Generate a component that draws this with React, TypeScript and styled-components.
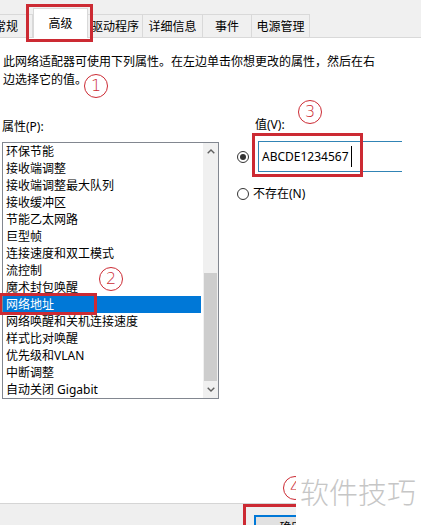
import styled, {createGlobalStyle} from "styled-components";

const GlobalStyle = createGlobalStyle`
  body {
    margin: 0;
    font-family: "Noto Sans", "Noto Sans CJK SC", sans-serif;
  }
`

const RED = "#cc2a33";

const Page = styled.div`
  position: relative;
  width: 421px;
  height: 525px;
  overflow: hidden;
  background: #fff;
  display: flex;
  flex-direction: column;
  font-size: 12px;
  color: #000;
`

const TabStrip = styled.div`
  box-sizing: border-box;
  height: 38px;
  background: #f0f0f0;
  border-bottom: 1px solid #d9d9d9;
  display: flex;
  align-items: flex-end;
`

const TabRow = styled.div`
  display: flex;
  align-items: flex-end;
  margin-left: -20px;
`

const Tab = styled.div<{ $w: number; $active?: boolean }>`
  position: relative;
  box-sizing: border-box;
  width: ${p => p.$w}px;
  height: ${p => (p.$active ? 30 : 23)}px;
  margin-bottom: ${p => (p.$active ? -1 : 0)}px;
  background: ${p => (p.$active ? "#fff" : "#f0f0f0")};
  border-top: 1px solid #d9d9d9;
  border-right: 1px solid #d9d9d9;
  border-left: ${p => (p.$active ? "1px solid #d9d9d9" : "none")};
  display: flex;
  align-items: center;
  justify-content: center;
  padding-bottom: ${p => (p.$active ? 2 : 0)}px;
  white-space: nowrap;
`

const RedFrame = styled.div<{ $l: number; $t: number; $w: number; $h: number }>`
  position: absolute;
  left: ${p => p.$l}px;
  top: ${p => p.$t}px;
  width: ${p => p.$w}px;
  height: ${p => p.$h}px;
  box-sizing: border-box;
  border: 3px solid ${RED};
  pointer-events: none;
  z-index: 3;
`

const Marker = styled.div<{ $l: number; $t: number }>`
  position: absolute;
  left: ${p => p.$l}px;
  top: ${p => p.$t}px;
  width: 24px;
  height: 24px;
  box-sizing: border-box;
  border: 1.5px solid ${RED};
  border-radius: 50%;
  color: ${RED};
  font-family: "DejaVu Sans", sans-serif;
  font-size: 16px;
  font-weight: 300;
  line-height: 21px;
  text-align: center;
  z-index: 3;
`

const Body = styled.div`
  padding: 0 3px;
`

const Description = styled.div`
  position: relative;
  padding-top: 15px;
  line-height: 18px;
  white-space: nowrap;
`

const Columns = styled.div`
  display: flex;
  margin-top: 29px;
`

const LeftCol = styled.div`
  margin-left: -1px;
  width: 217px;
`

const FieldLabel = styled.div`
  line-height: 18px;
`

const ListBox = styled.div`
  position: relative;
  box-sizing: border-box;
  margin-top: 6px;
  height: 257px;
  border: 1px solid #828790;
  display: flex;
`

const Items = styled.div`
  flex: 1;
`

const Item = styled.div<{ $selected?: boolean }>`
  position: relative;
  height: 17px;
  line-height: 17px;
  padding-left: 3px;
  margin-right: 2px;
  white-space: nowrap;
  background: ${p => (p.$selected ? "#0078d7" : "transparent")};
  color: ${p => (p.$selected ? "#fff" : "#000")};
`

const ScrollBar = styled.div`
  width: 15px;
  background: #f0f0f0;
  display: flex;
  flex-direction: column;
`

const ArrowBtn = styled.div`
  height: 17px;
  display: flex;
  align-items: center;
  justify-content: center;
`

const Thumb = styled.div`
  margin: 113px 1px 0;
  height: 109px;
  background: #cdcdcd;
`

const Spacer = styled.div`
  flex: 1;
`

const RightCol = styled.div`
  margin-left: 18px;
  flex: 1;
  display: flex;
  flex-direction: column;
`

const ValueLabel = styled.div`
  margin: -2px 0 0 18px;
  line-height: 18px;
`

const ValueRow = styled.div`
  display: flex;
  align-items: center;
  gap: 9px;
  margin-top: 7px;
`

const Radio = styled.div<{ $checked?: boolean }>`
  box-sizing: border-box;
  width: 12px;
  height: 12px;
  border: 1px solid #333;
  border-radius: 50%;
  display: flex;
  align-items: center;
  justify-content: center;
  &::after {
    content: "";
    display: ${p => (p.$checked ? "block" : "none")};
    width: 6px;
    height: 6px;
    border-radius: 50%;
    background: #333;
  }
`

const ValueField = styled.div`
  position: relative;
  box-sizing: border-box;
  width: 144px;
  height: 31px;
  border: 1px solid #3184b5;
  border-right: none;
  padding-left: 3px;
  display: flex;
  align-items: center;
`

const Caret = styled.span`
  width: 1px;
  height: 21px;
  margin-left: 2px;
  background: #000;
`

const NoneRow = styled.div`
  display: flex;
  align-items: center;
  gap: 4px;
  margin-top: 15px;
  line-height: 14px;
`

const BottomBar = styled.div`
  position: relative;
  margin-top: auto;
  height: 22px;
  box-sizing: border-box;
  border-top: 1px solid #d5d5d5;
  background: #efefef;
  padding: 11px 0 0 254px;
`

const OkButton = styled.div`
  position: relative;
  box-sizing: border-box;
  width: 75px;
  height: 23px;
  background: #e1e1e1;
  border: 2px solid #0078d7;
  text-align: center;
  line-height: 21px;
`

const Watermark = styled.div`
  position: absolute;
  left: 296px;
  top: -36px;
  width: 125px;
  height: 60px;
  background: #fff;
  padding: 6px 0 0 4px;
  box-sizing: border-box;
  font-family: "Noto Sans CJK SC", sans-serif;
  font-size: 29px;
  font-weight: 300;
  line-height: 35px;
  color: #c6c6c6;
  z-index: 4;
  white-space: nowrap;
`

const tabs = [
    {label: "常规", w: 53},
    {label: "高级", w: 55, active: true},
    {label: "驱动程序", w: 55},
    {label: "详细信息", w: 60},
    {label: "事件", w: 49},
    {label: "电源管理", w: 58},
];

const properties = [
    "环保节能",
    "接收端调整",
    "接收端调整最大队列",
    "接收缓冲区",
    "节能乙太网路",
    "巨型帧",
    "连接速度和双工模式",
    "流控制",
    "魔术封包唤醒",
    "网络地址",
    "网络唤醒和关机连接速度",
    "样式比对唤醒",
    "优先级和VLAN",
    "中断调整",
    "自动关闭 Gigabit",
];

const Chevron = ({up}: { up?: boolean }) => (
    <svg width="8" height="5" viewBox="0 0 8 5">
        <polyline
            points={up ? "0.7,4.3 4,1 7.3,4.3" : "0.7,0.7 4,4 7.3,0.7"}
            fill="none"
            stroke="#606060"
            strokeWidth="1.4"
        />
    </svg>
);

const App = () => {
    return (
        <Page>
            <GlobalStyle/>
            <TabStrip>
                <TabRow>
                    {tabs.map(t => (
                        <Tab key={t.label} $w={t.w} $active={t.active}>
                            {t.label}
                            {t.active && <RedFrame $l={-8} $t={-5} $w={67} $h={38}/>}
                        </Tab>
                    ))}
                </TabRow>
            </TabStrip>
            <Body>
                <Description>
                    此网络适配器可使用下列属性。在左边单击你想更改的属性，然后在右
                    <br/>
                    边选择它的值。
                    <Marker $l={81} $t={36}>1</Marker>
                </Description>
                <Columns>
                    <LeftCol>
                        <FieldLabel>属性(P):</FieldLabel>
                        <ListBox>
                            <Items>
                                {properties.map(name => (
                                    <Item key={name} $selected={name === "网络地址"}>
                                        {name}
                                        {name === "网络地址" && <RedFrame $l={-4} $t={-3} $w={98} $h={22}/>}
                                    </Item>
                                ))}
                            </Items>
                            <ScrollBar>
                                <ArrowBtn><Chevron up/></ArrowBtn>
                                <Thumb/>
                                <Spacer/>
                                <ArrowBtn><Chevron/></ArrowBtn>
                            </ScrollBar>
                            <Marker $l={96} $t={124}>2</Marker>
                        </ListBox>
                    </LeftCol>
                    <RightCol>
                        <ValueLabel>值(V):</ValueLabel>
                        <ValueRow>
                            <Radio $checked/>
                            <ValueField>
                                ABCDE1234567
                                <Caret/>
                                <RedFrame $l={-7} $t={-9} $w={111} $h={44}/>
                                <Marker $l={39} $t={-42}>3</Marker>
                            </ValueField>
                        </ValueRow>
                        <NoneRow>
                            <Radio/>
                            不存在(N)
                        </NoneRow>
                    </RightCol>
                </Columns>
            </Body>
            <BottomBar>
                <OkButton>
                    确定
                    <RedFrame $l={-13} $t={-13} $w={100} $h={40}/>
                </OkButton>
                <Marker $l={283} $t={-28}>4</Marker>
                <Watermark>软件技巧</Watermark>
            </BottomBar>
        </Page>
    )
}

export default App;
